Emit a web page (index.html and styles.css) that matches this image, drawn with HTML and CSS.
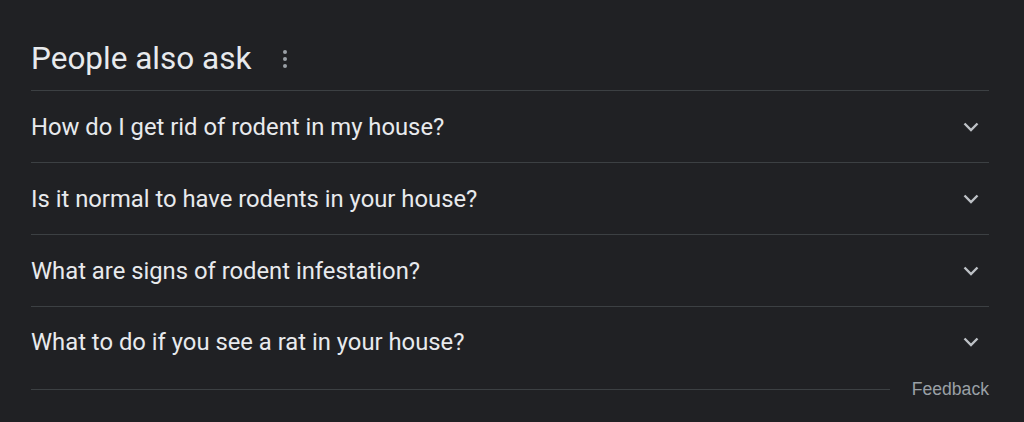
FILE: index.html
```html
<!DOCTYPE html>
<html>
<head>
<meta charset="utf-8">
<link rel="stylesheet" href="styles.css">
</head>
<body>
<div class="paa">
  <div class="head">
    <h2 class="title">People also ask</h2>
    <span class="kebab"><i></i><i></i><i></i></span>
  </div>
  <div class="row"><span class="q">How do I get rid of rodent in my house?</span><svg class="chev" viewBox="0 0 16 10"><path d="M1.5 1.5 L8 8 L14.5 1.5" fill="none" stroke="#bdc1c6" stroke-width="2.4"/></svg></div>
  <div class="row"><span class="q">Is it normal to have rodents in your house?</span><svg class="chev" viewBox="0 0 16 10"><path d="M1.5 1.5 L8 8 L14.5 1.5" fill="none" stroke="#bdc1c6" stroke-width="2.4"/></svg></div>
  <div class="row"><span class="q">What are signs of rodent infestation?</span><svg class="chev" viewBox="0 0 16 10"><path d="M1.5 1.5 L8 8 L14.5 1.5" fill="none" stroke="#bdc1c6" stroke-width="2.4"/></svg></div>
  <div class="row last"><span class="q">What to do if you see a rat in your house?</span><svg class="chev" viewBox="0 0 16 10"><path d="M1.5 1.5 L8 8 L14.5 1.5" fill="none" stroke="#bdc1c6" stroke-width="2.4"/></svg></div>
  <div class="foot">
    <span class="line"></span>
    <span class="fb">Feedback</span>
  </div>
</div>
</body>
</html>
```
FILE: styles.css
```css
html, body {
  margin: 0;
  background: #202124;
  height: 100%;
}
body {
  font-family: Roboto, "Liberation Sans", sans-serif;
  color: #e8eaed;
}
.paa {
  width: 958px;
  margin-left: 31px;
  padding-top: 27px;
}
.head {
  display: flex;
  align-items: center;
  height: 63px;
  border-bottom: 1px solid #3c4043;
}
.title {
  margin: 0;
  font-weight: 400;
  font-size: 31.5px;
  line-height: 38px;
  color: #e8eaed;
}
.kebab {
  display: flex;
  flex-direction: column;
  gap: 3px;
  margin-left: 32px;
}
.kebab i {
  display: block;
  width: 4px;
  height: 4px;
  border-radius: 50%;
  background: #9aa0a6;
}
.row {
  display: flex;
  align-items: center;
  justify-content: space-between;
  height: 71px;
  border-bottom: 1px solid #3c4043;
}
.row.last {
  border-bottom: none;
  height: 70px;
}
.q {
  font-size: 23.8px;
  color: #e8eaed;
}
.chev {
  width: 16px;
  height: 10px;
  margin-right: 10px;
}
.foot {
  display: flex;
  align-items: center;
  height: 24px;
}
.line {
  width: 859px;
  height: 1px;
  background: #3c4043;
}
.fb {
  margin-left: auto;
  font-size: 17.6px;
  color: #9aa0a6;
  font-family: Arial, "Liberation Sans", sans-serif;
}
```
